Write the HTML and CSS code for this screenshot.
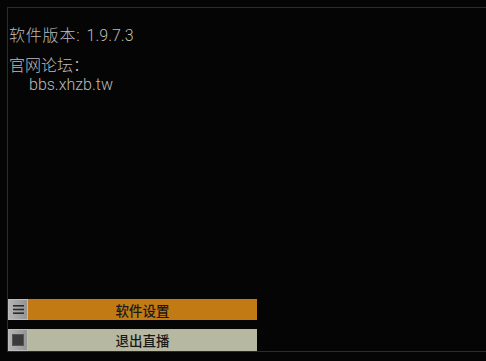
FILE: index.html
```html
<!DOCTYPE html>
<html lang="zh">
<head>
<meta charset="utf-8">
<link rel="stylesheet" href="styles.css">
</head>
<body>
<div class="frame">
  <div class="info">
    <div class="line"><span class="cjk">软件版本</span><span class="colon">:</span>1.9.7.3</div>
    <div class="site">
      <div class="line2">官网论坛：</div>
      <div class="line2 url">bbs.xhzb.tw</div>
    </div>
  </div>
  <div class="buttons">
    <div class="btn btn-orange">
      <div class="ico">
        <svg width="11" height="9" viewBox="0 0 11 9"><rect x="0" y="0" width="11" height="1.6" fill="#2a2a2a"/><rect x="0" y="3.7" width="11" height="1.6" fill="#2a2a2a"/><rect x="0" y="7.4" width="11" height="1.6" fill="#2a2a2a"/></svg>
      </div>
      <div class="label">软件设置</div>
    </div>
    <div class="btn btn-beige">
      <div class="ico">
        <div class="sq"></div>
      </div>
      <div class="label">退出直播</div>
    </div>
  </div>
</div>
</body>
</html>
```
FILE: styles.css
```css
html, body {
  margin: 0;
  padding: 0;
  background: #050505;
}
body {
  width: 486px;
  height: 361px;
  overflow: hidden;
  font-family: Roboto, "Noto Sans CJK SC", sans-serif;
}
.frame {
  margin: 7px 0 0 7px;
  height: 343px;
  border: 1px solid #2c2c2c;
  border-right: none;
  display: flex;
  flex-direction: column;
}
.info {
  padding: 18px 0 0 1px;
  color: #bcbcbc;
  font-size: 16px;
  font-weight: 300;
}
.line {
  line-height: 20px;
}
.cjk {
  letter-spacing: 0.8px;
}
.colon {
  margin-right: 7px;
}
.site {
  margin-top: 10px;
}
.line2 {
  line-height: 19px;
}
.url {
  padding-left: 20px;
}
.buttons {
  margin-top: auto;
  display: flex;
  flex-direction: column;
  gap: 9px;
}
.btn {
  width: 249px;
  height: 22px;
  display: flex;
  align-items: stretch;
}
.btn-orange {
  height: 21px;
}
.ico {
  width: 20px;
  box-sizing: border-box;
  border: 1px solid #bdbdbd;
  background: linear-gradient(90deg, #b4b4b4, #949494);
  display: flex;
  align-items: center;
  justify-content: center;
}
.sq {
  width: 10px;
  height: 10px;
  background: #3a3a3a;
  border: 1px solid #555;
}
.label {
  flex: 1;
  display: flex;
  align-items: center;
  justify-content: center;
  font-size: 13.5px;
  font-weight: 500;
  color: #1a1a1a;
}
.btn-orange .label {
  background: #c27a14;
}
.btn-beige .label {
  background: #b7b8a2;
}
```
